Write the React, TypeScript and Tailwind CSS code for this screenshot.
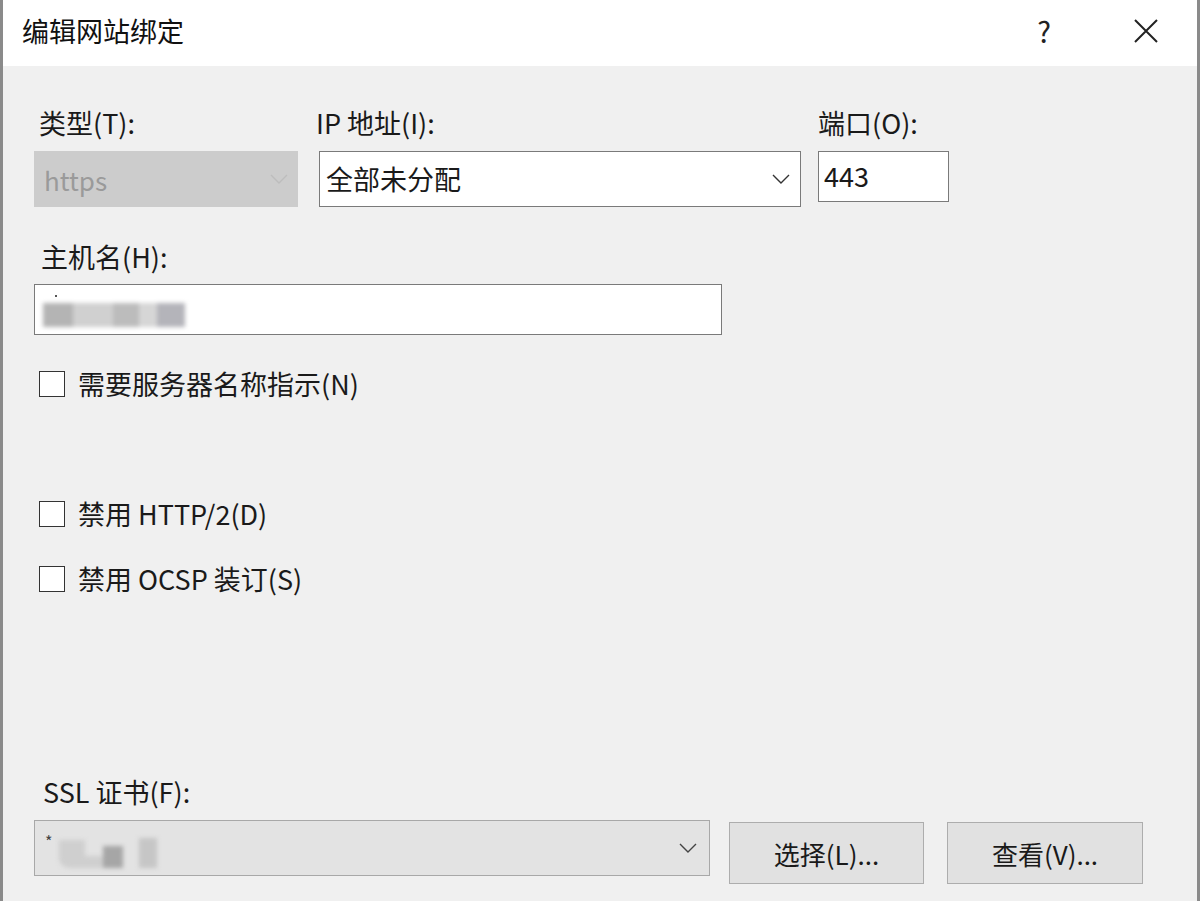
import React from "react";

const font = { fontFamily: '"Noto Sans CJK SC", "Noto Sans", sans-serif' };

const Chevron = ({ className = "" }: { className?: string }) => (
  <svg width="18" height="10" viewBox="0 0 18 10" className={className}>
    <path d="M1 1 L9 9 L17 1" fill="none" stroke="currentColor" strokeWidth="1.4" />
  </svg>
);

const Checkbox = ({ label }: { label: string }) => (
  <div className="flex items-center gap-[13px]">
    <div className="w-[26px] h-[26px] border-[1.5px] border-[#333] bg-white" />
    <span className="text-[27px] text-[#1a1a1a] leading-none">{label}</span>
  </div>
);

export default function App() {
  return (
    <div
      className="w-[1200px] h-[901px] bg-[#f0f0f0] border-x-[3px] border-[#8a8a8a] flex flex-col overflow-hidden"
      style={font}
    >
      {/* Title bar */}
      <div className="h-[66px] bg-white flex items-center pl-[19px] pr-[38px] pb-[4px] shrink-0">
        <span className="text-[27px] text-[#111]">编辑网站绑定</span>
        <div className="ml-auto flex items-center gap-[82px]">
          <span className="text-[29px] text-[#222]">?</span>
          <svg width="26" height="26" viewBox="0 0 26 26">
            <path d="M2 2 L24 24 M24 2 L2 24" stroke="#222" strokeWidth="2" />
          </svg>
        </div>
      </div>

      {/* Body */}
      <div className="flex-1 flex flex-col pl-[31px] text-[#1a1a1a]">
        {/* Row 1 */}
        <div className="flex mt-[42px]">
          <div className="flex flex-col w-[264px]">
            <span className="text-[27px] pl-[5px] leading-[30px]">类型(T):</span>
            <div className="mt-[13px] h-[56px] bg-[#cccccc] flex items-center px-[10px]">
              <span className="text-[26px] text-[#9a9a9a]">https</span>
              <Chevron className="ml-auto text-[#bdbdbd]" />
            </div>
          </div>
          <div className="flex flex-col w-[482px] ml-[21px]">
            <span className="text-[27px] leading-[30px] -ml-[3px]">IP 地址(I):</span>
            <div className="mt-[13px] h-[56px] bg-white border-[1.5px] border-[#7a7a7a] flex items-center pl-[6px] pr-[10px]">
              <span className="text-[27px]">全部未分配</span>
              <Chevron className="ml-auto text-[#333]" />
            </div>
          </div>
          <div className="flex flex-col w-[131px] ml-[17px]">
            <span className="text-[27px] leading-[30px]">端口(O):</span>
            <div className="mt-[13px] h-[51px] bg-white border-[1.5px] border-[#7a7a7a] flex items-center pl-[5px]">
              <span className="text-[27px]">443</span>
            </div>
          </div>
        </div>

        {/* Host name */}
        <span className="text-[27px] leading-[30px] mt-[35px] pl-[7px]">主机名(H):</span>
        <div className="mt-[12px] w-[688px] h-[51px] bg-white border-[1.5px] border-[#7a7a7a] flex items-center pl-[8px] relative">
          <span className="absolute left-[20px] top-[10px] w-[2px] h-[2px] bg-[#555]" />
          <div className="flex items-center blur-[2px] mt-[10px]">
            <div className="w-[30px] h-[24px] bg-[#b4b4b4]" />
            <div className="w-[40px] h-[24px] bg-[#d0d0d0]" />
            <div className="w-[26px] h-[24px] bg-[#bcbcbc]" />
            <div className="w-[18px] h-[24px] bg-[#d6d6d6]" />
            <div className="w-[28px] h-[24px] bg-[#b4b4ba]" />
          </div>
        </div>

        <div className="mt-[35px] ml-[5px]">
          <Checkbox label="需要服务器名称指示(N)" />
        </div>
        <div className="mt-[103px] ml-[5px]">
          <Checkbox label="禁用 HTTP/2(D)" />
        </div>
        <div className="mt-[38px] ml-[5px]">
          <Checkbox label="禁用 OCSP 装订(S)" />
        </div>

        {/* SSL */}
        <span className="text-[27px] leading-[30px] mt-[185px] pl-[9px]">SSL 证书(F):</span>
        <div className="flex items-start mt-[13px]">
          <div className="w-[676px] h-[56px] bg-[#e3e3e3] border-[1.5px] border-[#a8a8a8] flex items-center pl-[10px] pr-[12px] relative">
            <span className="absolute left-[10px] top-[12px] text-[16px] text-[#444] leading-none">*</span>
            <div className="flex items-end blur-[2px] ml-[14px] mt-[10px]">
              <div className="w-[26px] h-[28px] bg-[#cfcfcf] rounded-bl-[10px]" />
              <div className="w-[18px] h-[12px] bg-[#cfcfcf]" />
              <div className="w-[20px] h-[22px] bg-[#a6a6a6]" />
              <div className="w-[16px] h-[22px] bg-transparent" />
              <div className="w-[18px] h-[30px] bg-[#c6c6c6]" />
            </div>
            <Chevron className="ml-auto text-[#444]" />
          </div>
          <button className="ml-[19px] mt-[2px] w-[195px] h-[62px] bg-[#e1e1e1] border-[1.5px] border-[#adadad] text-[26px] text-[#1a1a1a]">
            选择(L)...
          </button>
          <button className="ml-[23px] mt-[2px] w-[196px] h-[62px] bg-[#e1e1e1] border-[1.5px] border-[#adadad] text-[26px] text-[#1a1a1a]">
            查看(V)...
          </button>
        </div>
      </div>
    </div>
  );
}
